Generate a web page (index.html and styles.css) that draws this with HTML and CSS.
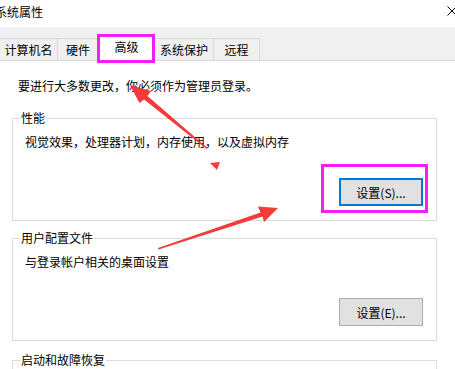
FILE: index.html
```html
<!DOCTYPE html>
<html lang="zh-CN">
  <head>
    <meta charset="UTF-8" />
    <title>系统属性</title>
    <link rel="stylesheet" href="styles.css">
  </head>
  <body>
    <div class="window">
      <div class="titlebar">
        <span class="title">系统属性</span>
        <svg class="close" viewBox="0 0 10 10" width="10" height="10">
          <path d="M0.5 0.5 L9.5 9.5 M9.5 0.5 L0.5 9.5" stroke="#000" stroke-width="1" fill="none" />
        </svg>
      </div>

      <div class="tabs">
        <div class="tab tab-name">计算机名</div>
        <div class="tab tab-hw">硬件</div>
        <div class="tab tab-adv active">高级</div>
        <div class="tab tab-prot">系统保护</div>
        <div class="tab tab-remote">远程</div>
      </div>

      <div class="panel">
        <p class="notice">要进行大多数更改，你必须作为管理员登录。</p>

        <fieldset class="group">
          <legend>性能</legend>
          <p>视觉效果，处理器计划，内存使用，以及虚拟内存</p>
          <div class="actions">
            <button class="btn btn-default">设置(S)...</button>
          </div>
        </fieldset>

        <fieldset class="group">
          <legend>用户配置文件</legend>
          <p>与登录帐户相关的桌面设置</p>
          <div class="actions">
            <button class="btn">设置(E)...</button>
          </div>
        </fieldset>

        <fieldset class="group group-last">
          <legend>启动和故障恢复</legend>
        </fieldset>
      </div>

      <!-- annotations drawn over the screenshot -->
      <svg class="marks" viewBox="0 0 455 369" width="455" height="369">
        <rect x="98.5" y="35.5" width="55" height="26" fill="none" stroke="#f51ef5" stroke-width="3" />
        <rect x="322.5" y="165.5" width="104" height="46" fill="none" stroke="#f51ef5" stroke-width="3" />
        <polygon points="130,85 151,91 147.5,96 207.5,148 206.5,149 144,99.5 139.5,103" fill="#f43b3b" />
        <polygon points="210,163 220,162 217,170" fill="#f43b3b" />
        <polygon points="278,208 258,206.5 260.5,212.5 158,248 158.5,249.5 262.5,216.5 264,222" fill="#f43b3b" />
      </svg>
    </div>
  </body>
</html>
```

FILE: styles.css
```css
body {
  margin: 0;
  background: #fff;
  color: #000;
  font-family: "Noto Sans CJK SC", "Microsoft YaHei", sans-serif;
  font-size: 12px;
}

.window {
  position: relative;
  width: 455px;
  height: 369px;
  overflow: hidden;
}

.titlebar {
  height: 27px;
  display: flex;
  align-items: flex-start;
  justify-content: space-between;
  padding-top: 4px;
  box-sizing: border-box;
}

.title {
  margin-left: -5px;
  line-height: 16px;
}

.close {
  margin-top: 2px;
  margin-right: -2px;
}

.tabs {
  display: flex;
  align-items: flex-end;
  height: 33px;
  background: #f0f0f0;
  border-bottom: 1px solid #d9d9d9;
}

.tab {
  box-sizing: border-box;
  height: 22px;
  line-height: 21px;
  text-align: center;
  border: 1px solid #d9d9d9;
  border-left: none;
  border-bottom: none;
}

.tab-name {
  width: 59px;
  margin-left: -1px;
  border-left: 1px solid #d9d9d9;
}

.tab-hw {
  width: 41px;
}

.tab-adv {
  width: 56px;
}

.tab-prot {
  width: 59px;
}

.tab-remote {
  width: 46px;
}

.tab.active {
  position: relative;
  height: 26px;
  line-height: 22px;
  margin-bottom: -1px;
  background: #fff;
}

.panel {
  padding: 17px 0 0 12px;
}

.notice {
  margin: 0 0 0 6px;
  line-height: 16px;
}

.group {
  box-sizing: border-box;
  width: 425px;
  margin: 16px 0 0 0;
  padding: 8px 13px 14px 12px;
  border: 1px solid #dcdcdc;
}

.group + .group {
  margin-top: 9px;
}

.group-last {
  height: 40px;
}

.group + .group-last {
  margin-top: 11px;
}

.group legend {
  margin-left: -5px;
  padding: 0 1px;
  line-height: 16px;
}

.group p {
  margin: 0;
  line-height: 16px;
}

.actions {
  display: flex;
  justify-content: flex-end;
  margin-top: 28px;
}

.btn {
  box-sizing: border-box;
  width: 84px;
  height: 28px;
  padding: 0;
  font: inherit;
  color: #000;
  background: #e1e1e1;
  border: 1px solid #adadad;
}

.btn-default {
  border: 2px solid #0078d7;
}

.marks {
  position: absolute;
  left: 0;
  top: 0;
  pointer-events: none;
}
```
